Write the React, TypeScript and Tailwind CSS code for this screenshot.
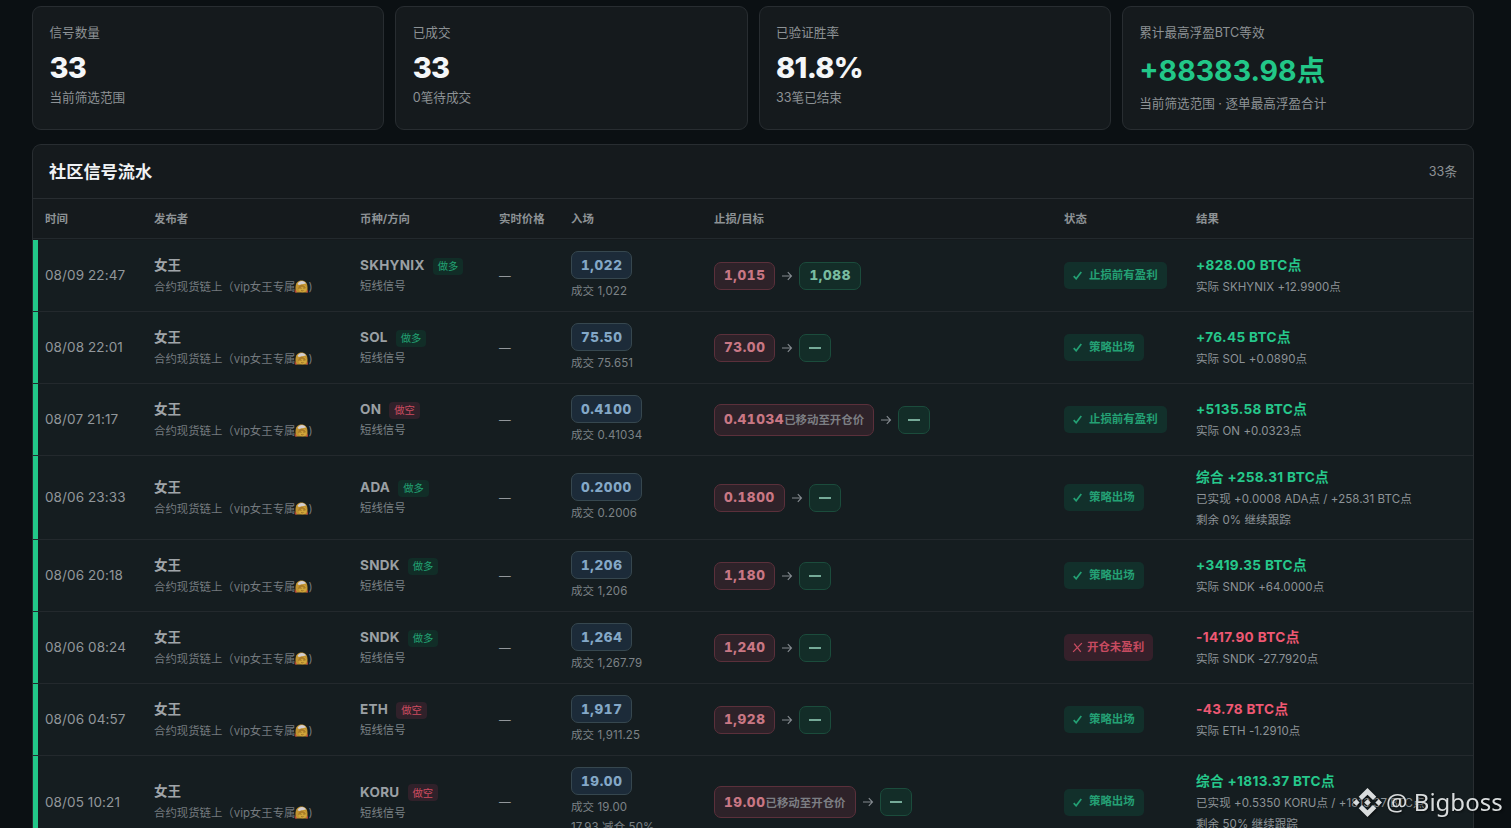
import React from "react";

type Row = {
  time: string;
  coin: string;
  long: boolean;
  entry: string;
  fill: string;
  extra?: string;
  stop: string;
  moved?: boolean;
  target?: string;
  status: string;
  ok: boolean;
  result: string;
  detail: string[];
  height: string;
};

const H = "h-[72px]";

const rows: Row[] = [
  { time: "08/09 22:47", coin: "SKHYNIX", long: true, entry: "1,022", fill: "1,022", stop: "1,015", target: "1,088", status: "止损前有盈利", ok: true, result: "+828.00 BTC点", detail: ["实际 SKHYNIX +12.9900点"], height: H },
  { time: "08/08 22:01", coin: "SOL", long: true, entry: "75.50", fill: "75.651", stop: "73.00", status: "策略出场", ok: true, result: "+76.45 BTC点", detail: ["实际 SOL +0.0890点"], height: H },
  { time: "08/07 21:17", coin: "ON", long: false, entry: "0.4100", fill: "0.41034", stop: "0.41034", moved: true, status: "止损前有盈利", ok: true, result: "+5135.58 BTC点", detail: ["实际 ON +0.0323点"], height: H },
  { time: "08/06 23:33", coin: "ADA", long: true, entry: "0.2000", fill: "0.2006", stop: "0.1800", status: "策略出场", ok: true, result: "综合 +258.31 BTC点", detail: ["已实现 +0.0008 ADA点 / +258.31 BTC点", "剩余 0% 继续跟踪"], height: "h-[84px]" },
  { time: "08/06 20:18", coin: "SNDK", long: true, entry: "1,206", fill: "1,206", stop: "1,180", status: "策略出场", ok: true, result: "+3419.35 BTC点", detail: ["实际 SNDK +64.0000点"], height: H },
  { time: "08/06 08:24", coin: "SNDK", long: true, entry: "1,264", fill: "1,267.79", stop: "1,240", status: "开仓未盈利", ok: false, result: "-1417.90 BTC点", detail: ["实际 SNDK -27.7920点"], height: H },
  { time: "08/06 04:57", coin: "ETH", long: false, entry: "1,917", fill: "1,911.25", stop: "1,928", status: "策略出场", ok: true, result: "-43.78 BTC点", detail: ["实际 ETH -1.2910点"], height: H },
  { time: "08/05 10:21", coin: "KORU", long: false, entry: "19.00", fill: "19.00", extra: "17.93 减仓 50%", stop: "19.00", moved: true, status: "策略出场", ok: true, result: "综合 +1813.37 BTC点", detail: ["已实现 +0.5350 KORU点 / +1813.37 BTC点", "剩余 50% 继续跟踪"], height: "h-[93px]" },
];

const cards = [
  { label: "信号数量", value: "33", note: "当前筛选范围" },
  { label: "已成交", value: "33", note: "0笔待成交" },
  { label: "已验证胜率", value: "81.8%", note: "33笔已结束" },
];

const cols = "grid grid-cols-[109px_206px_139px_72px_143px_350px_132px_1fr] pl-3";

function BrideIcon() {
  return (
    <svg viewBox="0 0 26 26" className="mb-[1px] h-[13px] w-[13px] shrink-0" aria-label="👰">
      <path d="M1 25V15C1 6 6 1 13 1s12 5 12 14v10Z" fill="#c0922f" />
      <path d="M5 8C8 0 19 0 22 7l-5 1-9 2Z" fill="#d3cfd2" />
      <ellipse cx="15" cy="17" rx="8" ry="7.500" fill="#d0a53a" />
      <path d="M6 18C7 10 12 9 15 10c4 1 7 4 7 7-4-1-6-2-8-4-2 3-5 5-8 5Z" fill="#a97a26" />
      <path d="M11 17h2M17 17h2M12 21q2.500 1.500 5 0" stroke="#76511d" strokeWidth="1.200" fill="none" />
      <path d="M0 19l4 6H0ZM26 19l-4 6h4Z" fill="#b23a3e" />
    </svg>
  );
}

function Arrow() {
  return (
    <svg viewBox="0 0 12 12" className="mx-[6px] h-3 w-3 shrink-0" fill="none" stroke="#858b90" strokeWidth="1.100">
      <path d="M1 6h9.500M6.800 2.200 10.500 6 6.800 9.800" />
    </svg>
  );
}

function StatusBadge({ ok, text }: { ok: boolean; text: string }) {
  return (
    <div
      className={`flex h-[27px] items-center rounded-[5px] text-[11.45px] font-bold ${
        ok ? "bg-[#12302b] pl-[9px] pr-[9px] text-[#24a074]" : "bg-[#35202a] pl-[8px] pr-[9px] text-[#c64b60]"
      }`}
    >
      {ok ? (
        <svg viewBox="0 0 10 10" className="mr-[7px] h-[9px] w-[9px]" fill="none" stroke="currentColor" strokeWidth="1.900">
          <path d="M.8 5.700 3.500 8.600 9.200 1" />
        </svg>
      ) : (
        <svg viewBox="0 0 10 10" className="mr-[4px] h-[11px] w-[11px]" fill="none" stroke="currentColor" strokeWidth="1.200">
          <path d="M1 9 9 1M2 1.500 8 9" />
        </svg>
      )}
      {text}
    </div>
  );
}

function SignalRow({ r }: { r: Row }) {
  return (
    <div className={`${cols} ${r.height} relative items-center border-b border-[#23292d] bg-[#151d20]`}>
      <div className="absolute left-0 top-0 h-full w-[5px] bg-[#22c788]" />
      <div className="text-[13.5px] tracking-[0.1px] text-[#92979b]">{r.time}</div>
      <div>
        <div className="text-[13.5px] font-bold leading-[20px] text-[#a0a5a9]">女王</div>
        <div className="mt-[2px] flex items-center text-[11.4px] leading-[20px] text-[#747a7f]">
          <span>合约现货链上（vip女王专属</span>
          <BrideIcon />
          <span>)</span>
        </div>
      </div>
      <div>
        <div className="flex items-center leading-[20px]">
          <span className="text-[13.5px] font-bold tracking-[0.3px] text-[#9ba0a4]">{r.coin}</span>
          <span
            className={`ml-[8px] mt-[2px] flex h-[17px] items-center rounded-[4px] px-[5px] text-[10.3px] ${
              r.long ? "bg-[#112d27] text-[#22a273]" : "bg-[#30212a] text-[#cc4c60]"
            }`}
          >
            {r.long ? "做多" : "做空"}
          </span>
        </div>
        <div className="mt-px text-[11.4px] leading-[20px] text-[#7c8286]">短线信号</div>
      </div>
      <div className="pt-[2px] text-[11.7px] text-[#92979b]">—</div>
      <div className="flex flex-col items-start">
        <div className="flex h-7 items-center rounded-[7px] border border-[#36474f] bg-[#1c2b39] px-[9px] pt-[1px] text-[13.5px] font-extrabold tabular-nums tracking-[0.6px] text-[#84a8c7]">
          {r.entry}
        </div>
        <div className="mt-[2px] text-[11.5px] leading-[20px] tracking-[0.1px] text-[#7c8286]">成交 {r.fill}</div>
        {r.extra && <div className="text-[11.5px] leading-[20px] tracking-[0.1px] text-[#7c8286]">{r.extra}</div>}
      </div>
      <div className="flex items-center">
        <div
          className={`flex items-center rounded-[7px] border border-[#5b303b] bg-[#2e2229] px-[9px] text-[13.5px] font-extrabold tabular-nums tracking-[0.6px] text-[#c97784] ${
            r.moved ? "h-8" : "h-7"
          }`}
        >
          {r.stop}
          {r.moved && <span className="mt-[3px] text-[11.45px] font-bold tracking-normal text-[#7c7e83]">已移动至开仓价</span>}
        </div>
        <Arrow />
        <div className="flex h-7 items-center rounded-[7px] border border-[#1b4c3c] bg-[#132d28] px-[9px] text-[13.5px] font-extrabold tabular-nums tracking-[0.6px] text-[#78bca0]">
          {r.target ?? <span className="h-[2px] w-[12px] bg-[#75aa98]" />}
        </div>
      </div>
      <div className="flex">
        <StatusBadge ok={r.ok} text={r.status} />
      </div>
      <div className="whitespace-nowrap">
        <div
          className={`text-[13.6px] font-bold leading-[22px] tracking-[0.35px] ${
            r.result.startsWith("-") ? "text-[#ef5873]" : "text-[#26c78b]"
          }`}
        >
          {r.result}
        </div>
        {r.detail.map((d) => (
          <div key={d} className="relative top-[1px] text-[11.5px] leading-[21px] tracking-[0.08px] text-[#8d9397]">
            {d}
          </div>
        ))}
      </div>
    </div>
  );
}

export default function App() {
  return (
    <div className="relative flex h-[828px] w-[1511px] flex-col overflow-hidden bg-[#0b1013] pl-[32px] pr-[37px] pt-[6px] font-['Inter','Noto_Sans_CJK_SC',sans-serif]">
      <div className="grid h-[124px] shrink-0 grid-cols-4 gap-[11px]">
        {cards.map((c) => (
          <div key={c.label} className="rounded-[9px] border border-[#282d31] bg-[#151a1d] px-[16.5px] pt-[16px]">
            <div className="text-[12.6px] leading-[20px] text-[#8d9295]">{c.label}</div>
            <div className="mt-[8px] text-[29px] font-extrabold leading-[34px] tracking-[-0.7px] text-[#f4f6f8]">{c.value}</div>
            <div className="mt-[3px] text-[12.6px] leading-[20px] text-[#8d9295]">{c.note}</div>
          </div>
        ))}
        <div className="rounded-[9px] border border-[#282d31] bg-[#151a1d] px-[16.5px] pt-[16px]">
          <div className="text-[12.6px] leading-[20px] text-[#8d9295]">累计最高浮盈BTC等效</div>
          <div className="mt-[8px] text-[28.5px] font-bold leading-[40px] text-[#22c788]">+88383.98点</div>
          <div className="mt-[3px] text-[12.6px] leading-[20px] text-[#8d9295]">当前筛选范围 · 逐单最高浮盈合计</div>
        </div>
      </div>

      <div className="mt-[14px] flex-1 overflow-hidden rounded-t-[9px] border border-b-0 border-[#282d31] bg-[#151a1d]">
        <div className="flex h-[54px] items-center justify-between border-b border-[#282d31] px-4">
          <h1 className="text-[17.2px] font-bold text-[#f0f2f4]">社区信号流水</h1>
          <span className="pt-[1px] text-[12.6px] text-[#8d9295]">33条</span>
        </div>
        <div className={`${cols} h-[40px] items-center border-b border-[#23292d] pt-[2px] text-[11.4px] font-bold text-[#8d9295]`}>
          {["时间", "发布者", "币种/方向", "实时价格", "入场", "止损/目标", "状态", "结果"].map((h) => (
            <div key={h}>{h}</div>
          ))}
        </div>
        <div className="pt-px">
          {rows.map((r) => (
            <SignalRow key={r.time} r={r} />
          ))}
        </div>
      </div>

      <div className="absolute left-[1353px] top-[786px] flex items-center text-[#d9dcdd] drop-shadow-[1px_1px_1px_rgba(0,0,0,0.6)]">
        <svg viewBox="0 0 28 28" className="h-[29px] w-[29px]" fill="currentColor">
          <path d="M14 0 22.500 8.500 19.300 11.700 14 6.400 8.700 11.700 5.500 8.500ZM3.200 10.800 6.400 14 3.200 17.200 0 14ZM14 10.800 17.200 14 14 17.200 10.800 14ZM24.800 10.800 28 14 24.800 17.200 21.600 14ZM8.700 16.300 14 21.600 19.300 16.300 22.500 19.500 14 28 5.500 19.500Z" />
        </svg>
        <span className="ml-[4px] whitespace-nowrap font-['Noto_Sans',sans-serif] text-[24px] leading-[32px]">@ Bigboss</span>
      </div>
    </div>
  );
}
